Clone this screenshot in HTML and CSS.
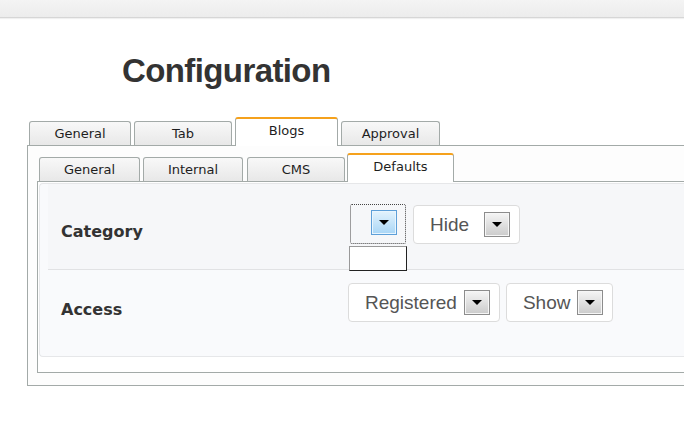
FILE: index.html
```html
<!DOCTYPE html>
<html>
<head>
<meta charset="utf-8">
<link rel="stylesheet" href="styles.css">
</head>
<body>
<div class="topbar"></div>
<h1 class="title">Configuration</h1>
<div class="outer-wrap">
  <div class="tabs outer-tabs">
    <div class="tab">General</div>
    <div class="tab">Tab</div>
    <div class="tab active">Blogs</div>
    <div class="tab">Approval</div>
  </div>
  <div class="panel outer-panel">
    <div class="inner-wrap">
      <div class="tabs inner-tabs">
        <div class="tab">General</div>
        <div class="tab">Internal</div>
        <div class="tab">CMS</div>
        <div class="tab active">Defaults</div>
      </div>
      <div class="panel inner-panel">
        <div class="content">
          <div class="row row-category">
            <div class="label">Category</div>
            <div class="controls">
              <div class="focus-select">
                <span class="btn btn-blue"><svg width="10" height="5" viewBox="0 0 10 5"><path d="M0 0H10L5 5Z" fill="#000"/></svg></span>
                <div class="droplist"></div>
              </div>
              <div class="select sel-hide"><span class="val">Hide</span><span class="btn"><svg width="10" height="5" viewBox="0 0 10 5"><path d="M0 0H10L5 5Z" fill="#000"/></svg></span></div>
            </div>
          </div>
          <div class="row row-access">
            <div class="label">Access</div>
            <div class="controls">
              <div class="select"><span class="val">Registered</span><span class="btn"><svg width="10" height="5" viewBox="0 0 10 5"><path d="M0 0H10L5 5Z" fill="#000"/></svg></span></div>
              <div class="select"><span class="val">Show</span><span class="btn"><svg width="10" height="5" viewBox="0 0 10 5"><path d="M0 0H10L5 5Z" fill="#000"/></svg></span></div>
            </div>
          </div>
        </div>
      </div>
    </div>
  </div>
</div>
</body>
</html>
```
FILE: styles.css
```css
html, body {
  margin: 0;
  padding: 0;
  background: #fff;
  overflow: hidden;
}
body {
  font-family: "DejaVu Sans", sans-serif;
  width: 684px;
  height: 438px;
}
.topbar {
  height: 17px;
  background: linear-gradient(#f4f4f4, #ececec);
  border-bottom: 1px solid #d6d6d6;
  box-shadow: 0 1px 1px rgba(0,0,0,0.06);
}
.title {
  margin: 33px 0 0 122px;
  font-family: "Liberation Sans", Arial, sans-serif;
  font-weight: bold;
  font-size: 33px;
  line-height: 40px;
  letter-spacing: -0.6px;
  color: #333;
}
.outer-wrap {
  margin: 26px 0 0 27px;
  width: 657px;
}
.tabs {
  display: flex;
  align-items: flex-end;
  gap: 3px;
  padding-left: 2px;
}
.tab {
  box-sizing: border-box;
  height: 24px;
  width: 100px;
  background: linear-gradient(#f8f8f8, #e8e8e8);
  border: 1px solid #a3aaa8;
  border-bottom: none;
  border-radius: 3px 3px 0 0;
  font-size: 13px;
  line-height: 24px;
  color: #1e1e1e;
  text-align: center;
}
.tab.active {
  height: 29px;
  margin-bottom: -1px;
  background: #fff;
  border-top: 2px solid #f5a11c;
  line-height: 24px;
  position: relative;
  z-index: 1;
}
.outer-tabs .tab:nth-child(1) { width: 102px; }
.outer-tabs .tab:nth-child(2) { width: 98px; }
.outer-tabs .tab:nth-child(3) { width: 103px; }
.outer-tabs .tab:nth-child(4) { width: 99px; }
.inner-tabs .tab:nth-child(1) { width: 101px; }
.inner-tabs .tab:nth-child(2) { width: 100px; }
.inner-tabs .tab:nth-child(3) { width: 98px; margin-left: 1px; }
.inner-tabs .tab:nth-child(4) { width: 107px; margin-left: -1px; }
.panel {
  border: 1px solid #a3aaa8;
  border-right: none;
  background: #fff;
}
.outer-panel {
  padding: 7px 0 12px 0;
  background: #fdfdfd;
}
.inner-wrap {
  margin-left: 9px;
}
.inner-panel {
  padding: 1px 0 15px 1px;
}
.content {
  background: #f9fafc;
  border: 1px solid #e6e7e9;
  border-right: none;
  border-radius: 4px 0 0 4px;
  padding-left: 8px;
}
.row {
  display: grid;
  grid-template-columns: 300px 1fr;
  align-items: start;
  box-sizing: border-box;
}
.row-category {
  height: 86px;
  padding-top: 21px;
  background: #f6f7f9;
  border-bottom: 1px solid #e1e2e4;
}
.row-access {
  height: 86px;
  padding-top: 13px;
}
.label {
  padding-left: 13px;
  margin-top: 17px;
  font-weight: bold;
  font-size: 16px;
  line-height: 20px;
  color: #333;
}
.controls {
  display: flex;
  gap: 6px;
  align-items: flex-start;
}
.select {
  box-sizing: border-box;
  height: 39px;
  display: flex;
  align-items: center;
  padding: 0 9px 0 16px;
  gap: 7px;
  background: #fff;
  border: 1px solid #dcdcdc;
  border-radius: 4px;
  font-family: "Liberation Sans", Arial, sans-serif;
  font-size: 19px;
  color: #555;
}
.sel-hide { margin-left: 1px; gap: 15px; }
.btn {
  box-sizing: border-box;
  width: 26px;
  height: 25px;
  display: flex;
  align-items: center;
  justify-content: center;
  border: 1px solid #8c8c8c;
  box-shadow: inset 0 0 0 1px #f6f6f6;
  background: linear-gradient(#f5f5f5, #cbcbcb);
}
.btn svg { display: block; margin-top: -1px; }
.btn-blue {
  border-color: #5d9fd8;
  box-shadow: inset 0 0 0 1px #e8f5fe;
  background: linear-gradient(#e3f3fd, #a9d6f6);
}
.focus-select {
  position: relative;
  box-sizing: border-box;
  width: 56px;
  height: 40px;
  margin-left: 2px;
  margin-top: -1px;
  border: 1px dotted #444;
  border-radius: 2px;
  display: flex;
  justify-content: flex-end;
  align-items: flex-start;
  padding: 5px 8px 0 0;
}
.droplist {
  position: absolute;
  left: -2px;
  top: 41px;
  width: 58px;
  height: 25px;
  box-sizing: border-box;
  background: #fff;
  border: 1px solid #999;
  border-right-color: #222;
  border-bottom-color: #222;
}
```
